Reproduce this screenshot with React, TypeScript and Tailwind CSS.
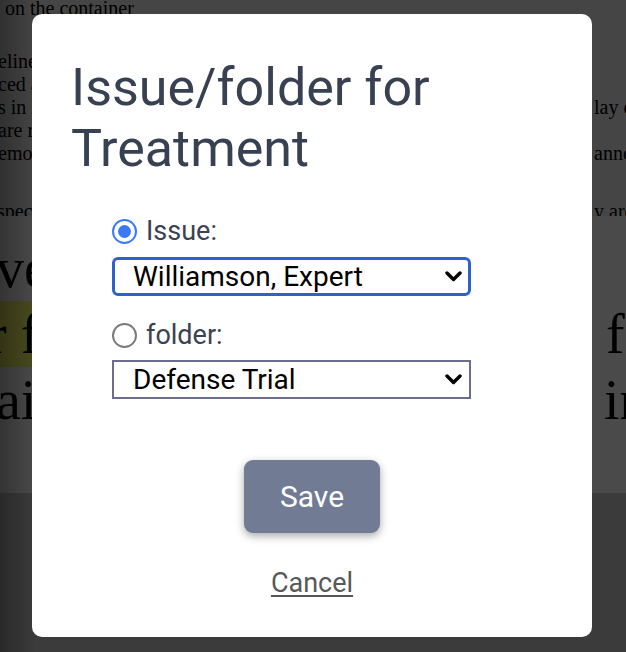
import React from 'react';

function Chevron() {
  return (
    <svg width="17" height="11" viewBox="0 0 17 11" className="shrink-0">
      <path d="M2 2l6.5 6.5L15 2" fill="none" stroke="#000" strokeWidth="3.4" strokeLinecap="round" strokeLinejoin="round" />
    </svg>
  );
}

function Radio({ checked, label }: { checked?: boolean; label: string }) {
  return (
    <label className="flex h-[32px] items-center gap-[9px]">
      {checked ? (
        <span className="flex h-[25px] w-[25px] items-center justify-center rounded-full border-[2.5px] border-[#3a7bf4] bg-white">
          <span className="h-[13px] w-[13px] rounded-full bg-[#3a7bf4]" />
        </span>
      ) : (
        <span className="h-[25px] w-[25px] rounded-full border-2 border-[#7b7b7b] bg-white" />
      )}
      <span className="text-[27px] leading-[32px] text-[#3a4253]">{label}</span>
    </label>
  );
}

const smallLines = [
  { left: 'eline', right: '' },
  { left: 'ced a', right: '' },
  { left: 's in l', right: 'lay c' },
  { left: 'are r', right: '' },
  { left: 'emo', right: 'anno' },
];

export default function App() {
  return (
    <div className="relative h-[652px] w-[626px] overflow-hidden bg-[#cbcbcb]">
      {/* page behind the dialog */}
      <div className="font-['Liberation_Serif',serif] text-black">
        <div className="h-[216px] overflow-hidden bg-[#ececec] text-[20px] leading-[23px] whitespace-nowrap">
          <div className="mt-[-3px] pl-[5px]">on the container</div>
          <div className="mt-[30px]">
            {smallLines.map((l, i) => (
              <div key={i} className="grid grid-cols-[594px_auto]">
                <span className="-ml-[2px]">{l.left}</span>
                <span>{l.right}</span>
              </div>
            ))}
          </div>
          <div className="mt-[35px] grid grid-cols-[594px_auto]">
            <span className="-ml-[3px]">spec</span>
            <span>y are</span>
          </div>
        </div>
        <div className="h-[277px] overflow-hidden bg-white pt-[19px] text-[56px] leading-[66px] whitespace-nowrap">
          <div className="grid grid-cols-[606px_auto]">
            <span className="-ml-[4px]">ve</span>
            <span></span>
          </div>
          <div className="grid grid-cols-[606px_auto]">
            <span>
              <span className="-ml-[12px] inline-block w-[60px] bg-[#ffff6b]">r f</span>
            </span>
            <span>f</span>
          </div>
          <div className="grid grid-cols-[604px_auto]">
            <span className="-ml-[4px]">ai</span>
            <span>in</span>
          </div>
        </div>
      </div>

      {/* backdrop */}
      <div className="absolute inset-0 bg-black/[0.71]" />
      <div className="absolute inset-y-0 left-0 w-[36px] bg-gradient-to-r from-black/30 to-transparent" />

      {/* dialog */}
      <div className="absolute inset-0 flex pt-[14px] pl-[32px] font-['Roboto',sans-serif]">
        <div className="flex h-[623px] w-[560px] flex-col rounded-[10px] bg-white pt-[43px]">
          <h1 className="pl-[39px] text-[52px] leading-[61px] font-normal text-[#374152]">
            Issue/folder for
            <br />
            Treatment
          </h1>

          <div className="mt-[36px] ml-[80px] flex w-[359px] flex-col">
            <Radio checked label="Issue:" />
            <div className="mt-[10px] flex h-[39px] items-center justify-between rounded-[6px] border-[3px] border-[#2d62cc] pr-[6px] pl-[18px]">
              <span className="text-[28px] leading-none text-black">Williamson, Expert</span>
              <Chevron />
            </div>

            <div className="mt-[23px]">
              <Radio label="folder:" />
            </div>
            <div className="mt-[9px] flex h-[39px] items-center justify-between border-2 border-[#6c6c8b] pr-[7px] pl-[19px]">
              <span className="text-[28px] leading-none text-black">Defense Trial</span>
              <Chevron />
            </div>
          </div>

          <div className="mt-[61px] flex flex-col items-center">
            <button className="h-[73px] w-[136px] rounded-[9px] bg-[#717b93] text-[30px] text-white shadow-[0_3px_8px_rgba(0,0,0,0.35)]">
              Save
            </button>
            <a className="mt-[34px] text-[27px] leading-[32px] text-[#585858] underline underline-offset-[3px]">
              Cancel
            </a>
          </div>
        </div>
      </div>
    </div>
  );
}
